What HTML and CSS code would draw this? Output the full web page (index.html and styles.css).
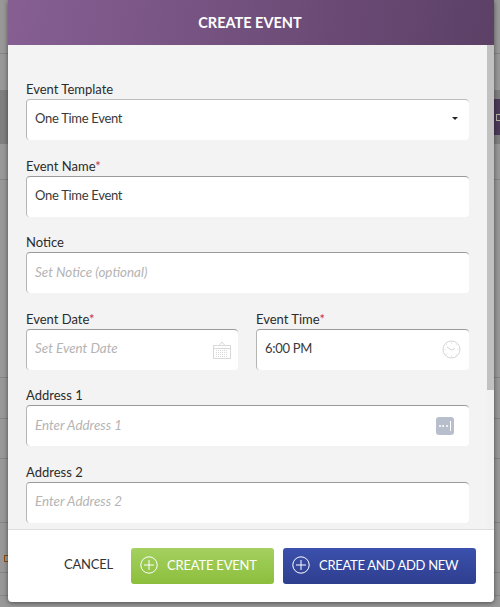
FILE: index.html
```html
<!DOCTYPE html>
<html lang="en">

<head>
  <meta charset="UTF-8" />
  <meta name="viewport" content="width=device-width, initial-scale=1.0" />
  <title>Create Event</title>
  <link rel="stylesheet" href="styles.css">
</head>

<body>

  <!-- page behind the overlay -->
  <div class="backdrop">
    <div class="back-row-dark"></div>
    <div class="back-tab"><span class="back-tab-glyph"></span></div>
    <div class="back-tick"></div>
  </div>

  <div class="modal">
    <header class="modal-header">CREATE EVENT</header>

    <div class="modal-body">
      <form class="modal-form">
        <div class="field">
          <label>Event Template</label>
          <div class="input input-select">
            <span class="value">One Time Event</span>
            <span class="caret"></span>
          </div>
        </div>

        <div class="field">
          <label>Event Name<span class="req">*</span></label>
          <div class="input"><span class="value">One Time Event</span></div>
        </div>

        <div class="field">
          <label>Notice</label>
          <div class="input"><span class="placeholder">Set Notice (optional)</span></div>
        </div>

        <div class="field-row">
          <div class="field">
            <label>Event Date<span class="req">*</span></label>
            <div class="input">
              <span class="placeholder">Set Event Date</span>
              <svg class="icon-cal" width="18" height="18" viewBox="0 0 18 18" fill="none" stroke="#d9d9d9">
                <path d="M6 4.500 9 1l3 3.500" />
                <rect x="0.500" y="4.500" width="17" height="13" />
                <path d="M0.500 7.500h17" />
                <path d="M3 9.500h12M3 11.500h12M3 13.500h12M3 15.500h12" stroke-dasharray="1 1" />
              </svg>
            </div>
          </div>
          <div class="field">
            <label>Event Time<span class="req">*</span></label>
            <div class="input">
              <span class="value">6:00 PM</span>
              <svg width="19" height="19" viewBox="0 0 19 19" fill="none" stroke="#d4d4d4">
                <circle cx="9.500" cy="9.500" r="8.500" />
                <path d="M9.500 10 5 7M9.500 10l3.500-1.500" />
                <path d="M9.500 2.500v1M9.500 15.500v1M2.500 9.500h1M15.500 9.500h1M4.500 4.500l.7.7M13.800 13.800l.7.7M14.500 4.500l-.7.7M5.200 13.800l-.7.7" />
              </svg>
            </div>
          </div>
        </div>

        <div class="field">
          <label>Address 1</label>
          <div class="input">
            <span class="placeholder">Enter Address 1</span>
            <span class="autofill"><i></i><i></i><i></i><b></b></span>
          </div>
        </div>

        <div class="field">
          <label>Address 2</label>
          <div class="input"><span class="placeholder">Enter Address 2</span></div>
        </div>
      </form>
      <div class="scrollbar"><div class="scroll-thumb"></div></div>
    </div>

    <footer class="modal-footer">
      <button type="button" class="btn-cancel">CANCEL</button>
      <button type="button" class="btn btn-green">
        <svg width="18" height="18" viewBox="0 0 18 18" fill="none" stroke="currentColor">
          <circle cx="9" cy="9" r="8.200" />
          <path d="M9 4v10M4 9h10" />
        </svg>
        CREATE EVENT
      </button>
      <button type="button" class="btn btn-blue">
        <svg width="18" height="18" viewBox="0 0 18 18" fill="none" stroke="currentColor">
          <circle cx="9" cy="9" r="8.200" />
          <path d="M9 4v10M4 9h10" />
        </svg>
        CREATE AND ADD NEW
      </button>
    </footer>
  </div>

</body>

</html>
```

FILE: styles.css
```css
body {
  font-family: 'Lato', sans-serif;
  margin: 0;
  padding: 0;
  height: 607px;
  overflow: hidden;
  background: #989898;
  color: #333;
}

/* table rows of the page behind show as thin lines */
.backdrop {
  position: absolute;
  inset: 0;
  background-repeat: no-repeat;
  background-size: 100% 1px;
  background-image:
    linear-gradient(#858585, #858585),
    linear-gradient(#858585, #858585),
    linear-gradient(#858585, #858585),
    linear-gradient(#858585, #858585),
    linear-gradient(#858585, #858585),
    linear-gradient(#858585, #858585),
    linear-gradient(#858585, #858585),
    linear-gradient(#858585, #858585);
  background-position: 0 53px, 0 179px, 0 377px, 0 418px, 0 458px, 0 522px, 0 572px, 0 595px;
}

.back-row-dark {
  position: absolute;
  left: 0;
  right: 0;
  top: 90px;
  height: 54px;
  background: #7f7f7f;
}

.back-tab {
  position: absolute;
  right: 0;
  top: 99px;
  width: 6px;
  height: 36px;
  overflow: hidden;
  background: #4b3a58;
}

.back-tab-glyph {
  position: absolute;
  left: 2px;
  top: 15px;
  width: 6px;
  height: 7px;
  border: 1px solid #b8b4a8;
  box-sizing: border-box;
}

.back-tick {
  position: absolute;
  left: 4px;
  top: 555px;
  width: 4px;
  height: 7px;
  border: 1px solid #8a4a10;
  border-right: none;
  box-sizing: border-box;
}

.modal {
  position: absolute;
  left: 8px;
  top: 0;
  width: 486px;
  height: 602px;
  display: flex;
  flex-direction: column;
  background: #fff;
  border-radius: 0 0 4px 4px;
  box-shadow: 0 1px 5px rgba(0, 0, 0, 0.5);
}

.modal-header {
  height: 45px;
  flex: none;
  box-sizing: border-box;
  padding-right: 2px;
  display: flex;
  align-items: center;
  justify-content: center;
  background: linear-gradient(100deg, #875f93, #5c4066);
  color: #fff;
  font-size: 14.5px;
  font-weight: 700;
}

.modal-body {
  flex: 1;
  min-height: 0;
  display: flex;
  overflow: hidden;
  background: #f3f3f3;
}

.modal-form {
  flex: 1;
  padding: 35px 18px 0;
}

.field {
  margin-bottom: 16.5px;
}

.field label {
  display: block;
  height: 18px;
  line-height: 18px;
  margin-bottom: 1px;
  font-size: 13px;
  color: #2b2b2b;
}

.req {
  color: #c9303e;
}

.field-row {
  display: flex;
  gap: 18px;
}

.field-row .field {
  flex: 1;
}

.field-row .field:first-child {
  flex: none;
  width: 212px;
}

.input {
  height: 41px;
  box-sizing: border-box;
  display: flex;
  align-items: center;
  justify-content: space-between;
  padding: 0 8px;
  background: #fff;
  border-top: 1px solid #9a9a9a;
  border-left: 1px solid #b5b5b5;
  border-radius: 4px;
  font-size: 13px;
}

.input-select {
  border-top-color: #bdbdbd;
  padding-right: 11px;
}

.value {
  margin-bottom: 4px;
  color: #3a3a3a;
  letter-spacing: -0.3px;
}

.placeholder {
  margin-bottom: 3px;
  font-size: 13.4px;
  color: #b4b4b4;
  font-style: italic;
}

.caret {
  width: 0;
  height: 0;
  margin-bottom: 3px;
  border-left: 3px solid transparent;
  border-right: 3px solid transparent;
  border-top: 3px solid #222;
}

.icon-cal {
  margin-right: -1px;
}

.autofill {
  width: 18px;
  height: 18px;
  margin-right: 7px;
  display: flex;
  align-items: center;
  justify-content: center;
  gap: 1.500px;
  border-radius: 3px;
  background: #b8bfcc;
}

.autofill i {
  width: 2px;
  height: 2px;
  border-radius: 50%;
  background: #fff;
}

.autofill b {
  width: 1px;
  height: 10px;
  margin-left: 1px;
  background: #fff;
}

.scrollbar {
  width: 7px;
  flex: none;
  background: #f1f1f1;
}

.scroll-thumb {
  height: 345px;
  background: #c1c1c1;
}

.modal-footer {
  height: 73px;
  flex: none;
  box-sizing: border-box;
  display: flex;
  align-items: center;
  padding: 0 18px 0 56px;
  border-top: 1px solid #ddd;
}

.btn-cancel {
  width: 67px;
  padding: 0 0 4px;
  text-align: left;
  background: none;
  border: none;
  font-family: inherit;
  font-size: 13px;
  letter-spacing: -0.2px;
  color: #333;
}

.btn {
  height: 36px;
  display: flex;
  align-items: center;
  gap: 9px;
  padding: 0 0 2px 9px;
  border: none;
  border-radius: 3px;
  font-family: inherit;
  font-size: 13px;
  letter-spacing: -0.2px;
  color: #fff;
}

.btn-green {
  width: 143px;
  margin-right: 9px;
  background: linear-gradient(#a4d160, #8cbf3c);
}

.btn-blue {
  width: 193px;
  letter-spacing: -0.3px;
  background: linear-gradient(#3b51ad, #2f3f8f);
}
```
